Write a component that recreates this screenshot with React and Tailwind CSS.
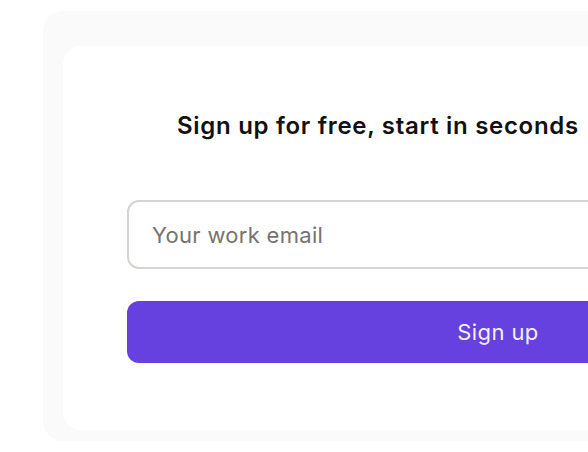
export default function App() {
  return (
    <div
      className="w-[588px] h-[452px] overflow-hidden bg-white pl-[43px] pt-[11px]"
      style={{ fontFamily: "Inter, 'Noto Sans', sans-serif" }}
    >
      <div className="w-[960px] rounded-[20px] bg-[#fafafa] pl-5 pt-[35px] pb-[11px]">
        <div className="w-[870px] rounded-[18px] bg-white px-16 pt-[66px] pb-[67px]">
          <h2 className="pl-[50px] text-[24px] leading-[28px] font-semibold text-[#111111] tracking-[0.7px]">
            Sign up for free, start in seconds
          </h2>
          <form className="mt-[60px] flex flex-col gap-8" onSubmit={(e) => e.preventDefault()}>
            <input
              type="email"
              placeholder="Your work email"
              className="h-[69px] w-[742px] rounded-xl border-2 border-[#d6d3d0] bg-white px-[23px] text-[22px] tracking-[0.3px] text-[#222] placeholder:text-[#77726e] outline-none"
            />
            <button
              type="submit"
              className="h-[62px] w-[742px] rounded-xl bg-[#6741e0] text-[22px] tracking-[0.4px] font-normal text-[#f3f0ff]"
            >
              Sign up
            </button>
          </form>
        </div>
      </div>
    </div>
  );
}
